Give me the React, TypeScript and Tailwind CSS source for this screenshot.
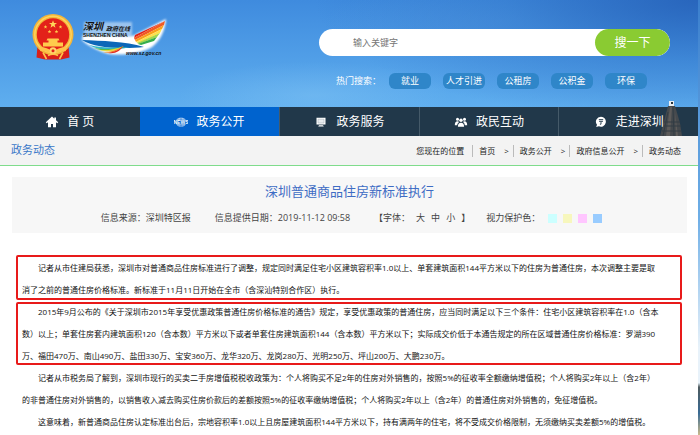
import React from 'react';

const navItems = [
    { label: '首 页', icon: 'home' },
    { label: '政务公开', icon: 'news' },
    { label: '政务服务', icon: 'screen' },
    { label: '政民互动', icon: 'users' },
    { label: '走进深圳', icon: 'chat' },
];

const hotWords = ['就业', '人才引进', '公租房', '公积金', '环保'];

const crumbs = ['首页', '政务公开', '政府信息公开', '政务动态'];

const eyeColors = [
    { name: '青色', className: 'bg-[#ccffff]' },
    { name: '黄色', className: 'bg-[#f7f7bd]' },
    { name: '粉色', className: 'bg-[#ffc6ff]' },
    { name: '蓝色', className: 'bg-[#99ccff]' },
];

const NavIcon: React.FC<{ name: string }> = ({ name }) => (
    <svg viewBox="0 0 14 12" className="w-[14px] h-3 shrink-0 fill-white" aria-hidden="true">
        {name === 'home' && (
            <path d="M7 .6.8 6.300l.9 1L3 6.200V11.300h3V8h2v3.300h3V6.200l1.300 1.100.9-1-2.200-2V1.500H9.300v1.200Z" />
        )}
        {name === 'news' && (
            <g>
                <path d="M2.200 4.200C3.600 2 5.200 1.800 7 1.800s3.600.2 4.800 2.400Z" opacity=".8" />
                <path d="M2.200 8.200C3.600 10.400 5.200 10.600 7 10.600s3.600-.2 4.800-2.400Z" opacity=".8" />
                <path d="M3 3.200h8M7 2v2M7 8.500v2M3.500 9.300h7" stroke="#0063ce" strokeWidth=".5" />
                <text x="7" y="8" fontSize="5" fontWeight="700" textAnchor="middle" fontFamily="Liberation Sans, sans-serif">
                    NEWS
                </text>
            </g>
        )}
        {name === 'screen' && (
            <g>
                <path d="M2.500 1.800h9v6.700h-9ZM5 9.300h4l.8 1.300H4.200Z" />
                <path d="M4 3.200h6v3.800H4Z" fill="#e8ecef" stroke="#a3aeb6" strokeWidth=".5" />
            </g>
        )}
        {name === 'users' && (
            <g>
                <circle cx="3.500" cy="3.200" r="1.500" />
                <circle cx="10.500" cy="3.200" r="1.500" />
                <circle cx="7" cy="4.300" r="1.700" />
                <path d="M.8 9.300c0-2.500 1-4 2.700-4 .7 0 1.200.2 1.600.6C3.900 6.900 3.300 7.700 3.200 9.300ZM13.200 9.300c0-2.500-1-4-2.700-4-.7 0-1.200.2-1.600.6 1.200.7 1.800 1.500 1.900 3.400ZM3.900 10.700c0-2.300 1-3.900 3.100-3.900s3.100 1.600 3.100 3.900Z" />
            </g>
        )}
        {name === 'chat' && (
            <g>
                <path d="M7 .7a5 5 0 1 1-2.100 9.600L2.200 11l.8-2.200A5 5 0 0 1 7 .7Z" />
                <path d="M4.800 3.600h4.400M5 5.300h4M7 5.300V8.200H5.900" fill="none" stroke="#20384a" strokeWidth=".9" />
            </g>
        )}
    </svg>
);

const Emblem: React.FC = () => (
    <svg viewBox="0 0 42 46" className="w-[42px] h-[46px]" role="img" aria-label="国徽">
        <path d="M5.500 32 4.500 43.500 13 45.500H29L37.500 43.500 36.500 32Z" fill="#d9201a" />
        <circle cx="21" cy="20.500" r="20.500" fill="#f3b53a" />
        <circle cx="21" cy="20.500" r="18.200" fill="none" stroke="#ffd45e" strokeWidth="1.400" />
        <circle cx="21" cy="20.500" r="16.200" fill="#e32119" />
        <path d="m21 6.200 1 2.800h3l-2.400 1.800.9 2.900L21 12l-2.500 1.700.9-2.900L17 9h3Z" fill="#ffd75a" />
        <g fill="#ffcb4c">
            <path d="m13.500 11 .5 1.200h1.300l-1 .9.300 1.300-1.100-.7-1.100.7.300-1.300-1-.9H13Z" />
            <path d="m28.500 11 .5 1.200h1.300l-1 .9.300 1.300-1.100-.7-1.100.7.300-1.300-1-.9H28Z" />
            <path d="m17.500 15.800.5 1.200h1.300l-1 .9.300 1.300-1.100-.7-1.100.7.300-1.300-1-.9H17Z" />
            <path d="m24.500 15.800.5 1.200h1.300l-1 .9.300 1.300-1.100-.7-1.100.7.300-1.300-1-.9H24Z" />
            <path d="M15.500 24.500h11l1 2h-13ZM16.500 26.500h9v2h-9ZM11 28.500h20v4H11Z" />
        </g>
        <path d="M7 33.500c4.500-1 8 .8 14 3.300 6-2.500 9.500-4.300 14-3.300l-1.500 3.800c-5-1-8 2.200-12.500 2.200S13.500 36.300 8.500 37.300Z" fill="#ffc34a" />
        <circle cx="21" cy="36.700" r="3.500" fill="#ffd56a" />
        <circle cx="21" cy="36.700" r="1.500" fill="#e32119" />
        <path d="M11 38.500 14.500 45M31 38.500 27.500 45M16 41.500c3-1.500 7-1.500 10 0" fill="none" stroke="#ffc34a" strokeWidth="1.600" />
    </svg>
);

const SiteLogo: React.FC = () => (
    <svg viewBox="0 0 88 40" className="w-[88px] h-10 overflow-visible" role="img" aria-label="深圳政府在线">
        <defs>
            <filter id="glow" x="-10%" y="-20%" width="120%" height="140%">
                <feGaussianBlur stdDeviation="1.200" />
            </filter>
        </defs>
        <path d="M2 17 52 18 85 1c-1 12-6 22-14 28-10 6-28 9-43 7C16 33 6 27 1 22Z" fill="#fff" filter="url(#glow)" />
        <path d="M3 4h48v14H3Z" fill="#fff" opacity=".45" filter="url(#glow)" />
        <path d="M84 3 54 17l-1 3Z" fill="#e2231a" />
        <path d="M84 3 53 20l1 2 29-15Z" fill="#f15a24" />
        <path d="M83 7 54 22l1 2 26-13Z" fill="#f9a01b" />
        <path d="M81 11 55 24l2 1 22-10Z" fill="#ffe04a" />
        <path d="M79 15 56 25l2 1 18-7Z" fill="#a5d64a" />
        <path d="M76 19 57 26l3 1 13-4Z" fill="#35ad4b" />
        <path d="M1 22c20 1 43 1 62 7-18 2-49 2-62-7Z" fill="#0c67b8" />
        <path d="M8 27c13 3 26 3 41 2-16 4-30 4-41-2Z" fill="#31b6c9" />
        <path d="M13 30c12 2 20 1 31-1-10 4-21 5-31 1Z" fill="#55b947" />
        <path d="M17 32c10 1 18-1 26-4-7 5-17 7-26 4Z" fill="#e9da3a" />
        <path d="M22 34c8 0 14-2 20-6-4 5-12 8-20 6Z" fill="#f58b22" />
        <path d="M27 35c6-1 11-3 15-7-3 5-7 8-15 7Z" fill="#e42b22" />
        <g fill="#111" fontFamily="'Liberation Serif', 'Noto Sans CJK SC', serif" fontWeight="700">
            <text x="2" y="12" fontSize="10" fontStyle="italic">深圳</text>
            <text x="25" y="13" fontSize="6" fontStyle="italic">政府在线</text>
        </g>
        <g fill="#111" fontFamily="'Liberation Sans', sans-serif">
            <text x="2" y="19" fontSize="5" fontWeight="700">SHENZHEN  CHINA</text>
            <text x="45" y="37" fontSize="5" fontWeight="700" fontStyle="italic">www.sz.gov.cn</text>
        </g>
    </svg>
);

const Tower: React.FC = () => (
    <svg viewBox="0 0 28 36" className="absolute right-3 bottom-0 w-7 h-9" aria-hidden="true">
        <path d="M11 1h5v5h-5Z" fill="#e9eef2" />
        <path d="M13 2h2v2h-2Z" fill="#26333d" />
        <path d="M10 6h7l5 17 2 13H2l4-15Z" fill="#45494d" />
        <path d="M12 7h2l-2 29H8ZM17 12l3 24h-2Z" fill="#5d5b5a" />
        <path d="M15 7 16 36M10 12 5 36M6 22h16M5 26h18M4 31h19" stroke="#333d45" fill="none" />
    </svg>
);

const Header: React.FC = () => {
    return (
        <header className="relative bg-linear-to-b from-[#3f8bde] to-[#68b8f3]">
            {/* Sky and thin clouds */}
            <div className="absolute inset-0 bg-[radial-gradient(ellipse_55%_90%_at_100%_0%,#2763baee_0%,#2f74c988_50%,transparent_100%),radial-gradient(ellipse_at_45%_70%,#8fcdf755_0%,transparent_25%),radial-gradient(ellipse_at_72%_15%,#6eb0ec44_0%,transparent_25%)]" />
            <div className="relative flex items-start justify-between pl-8 pr-7 h-[107px]">
                <a href="#" className="flex items-start gap-[7px] pt-[14px]">
                    <Emblem />
                    <span className="pt-1">
                        <SiteLogo />
                    </span>
                </a>
                <form className="w-[55%] pt-[29px]" onSubmit={(e) => e.preventDefault()}>
                    <div className="flex h-[27px] rounded-full bg-white overflow-hidden">
                        <input
                            type="text"
                            aria-label="输入关键字"
                            placeholder="输入关键字"
                            className="flex-1 min-w-0 pl-[34px] text-[9px] text-gray-700 placeholder:text-[#757575] outline-none"
                        />
                        <button type="submit" className="w-[75px] rounded-full bg-[#8acb32] text-xs text-white">
                            搜一下
                        </button>
                    </div>
                    <div className="flex items-center mt-[17px] pl-[17px] text-[9px] leading-4 text-white whitespace-nowrap">
                        <span className="w-[53px]">热门搜索：</span>
                        <div className="flex gap-3">
                            {hotWords.map((word) => (
                                <a key={word} href="#" className="w-[42px] h-4 rounded-md bg-[#2f86c9] text-center">
                                    {word}
                                </a>
                            ))}
                        </div>
                    </div>
                </form>
            </div>

            <nav className="relative bg-[#21384a]">
                <Tower />
                <ul className="relative grid grid-cols-5">
                    {navItems.map((item, i) => (
                        <li key={item.label} className={i > 1 ? 'border-l border-[#455a69]' : ''}>
                            <a
                                href="#"
                                className={`flex items-center justify-center gap-2 h-[29px] text-xs text-white whitespace-pre ${
                                    i === 1 ? 'bg-[#0063ce]' : ''
                                }`}
                            >
                                <NavIcon name={item.icon} />
                                {item.label}
                            </a>
                        </li>
                    ))}
                </ul>
            </nav>
        </header>
    );
};

const Breadcrumb: React.FC = () => (
    <div className="flex items-center justify-between h-[30px] pl-[11px] pr-[17px] bg-[#f3f3f3] border-b border-[#7fdc8c]">
        <h2 className="text-[11px] text-[#3a78c8]">政务动态</h2>
        <div className="flex items-center text-[8px] text-[#222]">
            <span className="pr-2">您现在的位置</span>
            {crumbs.map((crumb, i) => (
                <span key={crumb} className="flex items-center h-3 border-l border-[#bbb] pl-[6px]">
                    <a href="#">{crumb}</a>
                    {i < crumbs.length - 1 && <span className="pl-[9px] pr-1">&gt;</span>}
                </span>
            ))}
        </div>
    </div>
);

const ArticleHead: React.FC = () => (
    <div className="h-14 mt-[11px] ml-3 mr-[11px] bg-[#f7f7f7] text-center">
        <h1 className="text-[13px] leading-7 text-[#3e6cc4]">深圳普通商品住房新标准执行</h1>
        <div className="flex items-center justify-center pl-1 text-[9px] leading-[26px] text-[#444] whitespace-nowrap">
            <span className="pr-6">信息来源：深圳特区报</span>
            <span className="pr-6">信息提供日期：2019-11-12 09:58</span>
            <span className="flex gap-[6px] pr-4">
                <span>【字体：</span>
                <button type="button">大</button>
                <button type="button">中</button>
                <button type="button">小</button>
                <span>】</span>
            </span>
            <span className="pr-2">视力保护色：</span>
            <span className="flex gap-[6px]">
                {eyeColors.map((color) => (
                    <button key={color.name} type="button" aria-label={color.name} className={`size-[9px] ${color.className}`} />
                ))}
            </span>
        </div>
    </div>
);

const ArticleBody: React.FC = () => (
    <article className="mt-6 pl-[22px] pr-[16px] text-[8px] leading-[22px] text-[#111]">
        <p className="relative indent-4">
            记者从市住建局获悉，深圳市对普通商品住房标准进行了调整，规定同时满足住宅小区建筑容积率1.0以上、单套建筑面积144平方米以下的住房为普通住房，本次调整主要是取<br />
            消了之前的普通住房价格标准。新标准于11月11日开始在全市（含深汕特别合作区）执行。
            <span className="absolute -top-[2px] bottom-[1px] -left-[6px] right-0 border-2 border-[#e81a1a] rounded-xs" />
        </p>
        <p className="relative indent-4">
            2015年9月公布的《关于深圳市2015年享受优惠政策普通住房价格标准的通告》规定，享受优惠政策的普通住房，应当同时满足以下三个条件：住宅小区建筑容积率在1.0（含本<br />
            数）以上；单套住房套内建筑面积120（含本数）平方米以下或者单套住房建筑面积144（含本数）平方米以下；实际成交价低于本通告规定的所在区域普通住房价格标准：罗湖390<br />
            万、福田470万、南山490万、盐田330万、宝安360万、龙华320万、龙岗280万、光明250万、坪山200万、大鹏230万。
            <span className="absolute top-[1px] bottom-[2px] -left-[6px] right-0 border-2 border-[#e81a1a] rounded-xs" />
        </p>
        <p className="indent-4">
            记者从市税务局了解到，深圳市现行的买卖二手房增值税税收政策为：个人将购买不足2年的住房对外销售的，按照5%的征收率全额缴纳增值税；个人将购买2年以上（含2年）<br />
            的非普通住房对外销售的，以销售收入减去购买住房价款后的差额按照5%的征收率缴纳增值税；个人将购买2年以上（含2年）的普通住房对外销售的，免征增值税。
        </p>
        <p className="indent-4">
            这意味着，新普通商品住房认定标准出台后，宗地容积率1.0以上且房屋建筑面积144平方米以下，持有满两年的住宅，将不受成交价格限制，无须缴纳买卖差额5%的增值税。
        </p>
    </article>
);

const App: React.FC = () => {
    return (
        <div className="min-h-screen pr-[2px] bg-[linear-gradient(to_bottom,#3b7fcd_0%,#6eaee6_50%,#e8f2fa_80%,#e8f2fa_88%,#4d5a5e_89%,#3a6b94_95%,#c9b98a_100%)] font-['Open_Sans','Noto_Sans_CJK_SC',sans-serif]">
            <div className="min-h-screen bg-white">
                <Header />
                <Breadcrumb />
                <ArticleHead />
                <ArticleBody />
            </div>
        </div>
    );
};

export default App;
